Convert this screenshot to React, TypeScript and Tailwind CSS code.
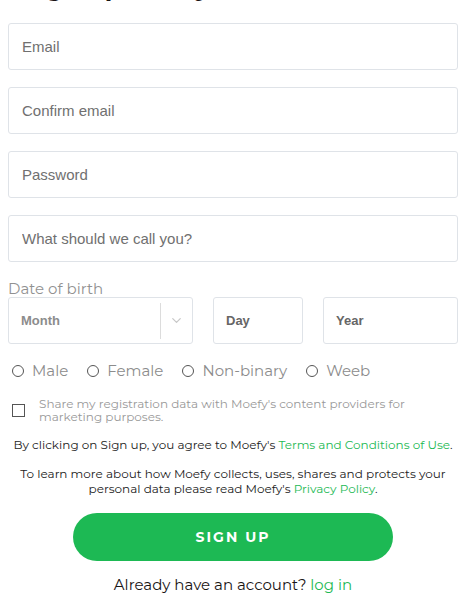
import { ChevronDown } from 'lucide-react'

const sans = 'font-["Montserrat","Open_Sans","DejaVu_Sans",sans-serif]'
const arial = 'font-["Liberation_Sans",Arial,sans-serif]'

function TextField({ placeholder }: { placeholder: string }) {
  return (
    <input
      type="text"
      placeholder={placeholder}
      className={`${arial} h-[47px] w-full rounded-[3px] border border-[#dfe3e8] bg-white px-[13px] text-[15px] text-[#333] placeholder:text-[#707070] outline-none`}
    />
  )
}

function Radio({ label }: { label: string }) {
  return (
    <label className="flex items-center gap-[8px]">
      <span className="h-[12px] w-[12px] rounded-full border border-[#555]" />
      <span className="text-[15px] leading-[18px] text-[#8c8c8c]">{label}</span>
    </label>
  )
}

export default function App() {
  return (
    <div className={`${sans} min-h-[610px] w-[474px] overflow-hidden bg-white`}>
      <div className="flex w-[466px] flex-col px-2">
        <h1 className="-mt-[28px] h-[30px] text-center text-[25px] font-bold leading-[30px] text-[#191414]">
          Sign up with your email address
        </h1>

        <div className="mt-[21px] flex flex-col gap-[17px]">
          <TextField placeholder="Email" />
          <TextField placeholder="Confirm email" />
          <TextField placeholder="Password" />
          <TextField placeholder="What should we call you?" />
        </div>

        <div className="mt-[19px] text-[15px] leading-[15px] text-[#919191]">Date of birth</div>

        <div className={`${arial} mt-px flex gap-[20px] text-[13px] font-bold`}>
          <div className="flex h-[47px] w-[185px] items-center rounded-[3px] border border-[#dfe3e8]">
            <span className="flex-1 pl-[12px] text-[#8c8c8c]">Month</span>
            <span className="h-[36px] w-px bg-[#dcdcdc]" />
            <span className="flex w-[31px] justify-center text-[#c8c8c8]">
              <ChevronDown size={15} strokeWidth={2} />
            </span>
          </div>
          <div className="flex h-[47px] w-[90px] items-center rounded-[3px] border border-[#dfe3e8] pl-[12px] text-[#666]">
            Day
          </div>
          <div className="flex h-[47px] flex-1 items-center rounded-[3px] border border-[#dfe3e8] pl-[12px] text-[#666]">
            Year
          </div>
        </div>

        <div className="mt-[18px] flex h-[18px] items-center gap-[19px] pl-1">
          <Radio label="Male" />
          <Radio label="Female" />
          <Radio label="Non-binary" />
          <Radio label="Weeb" />
        </div>

        <div className="mt-[17px] flex items-center gap-[14px] pl-1">
          <span className="h-[13px] w-[13px] shrink-0 border border-[#555]" />
          <p className="text-[12px] leading-[13px] text-[#999]">
            Share my registration data with Moefy's content providers for marketing purposes.
          </p>
        </div>

        <p className="mt-[14px] text-center text-[12px] leading-[15px] text-[#222]">
          By clicking on Sign up, you agree to Moefy's{' '}
          <a className="text-[#1db954]">Terms and Conditions of Use</a>.
        </p>
        <p className="mt-[14px] px-3 text-center text-[12px] leading-[15px] text-[#222]">
          To learn more about how Moefy collects, uses, shares and protects your personal data please read Moefy's{' '}
          <a className="text-[#1db954]">Privacy Policy</a>.
        </p>

        <button className="mx-auto mt-[17px] h-[48px] w-[320px] rounded-full bg-[#1db954] text-[14px] font-bold tracking-[2px] text-white">
          SIGN UP
        </button>

        <p className="mt-[15px] text-center text-[15px] leading-[18px] text-[#191414]">
          Already have an account? <a className="text-[#1db954]">log in</a>
        </p>
      </div>
    </div>
  )
}
